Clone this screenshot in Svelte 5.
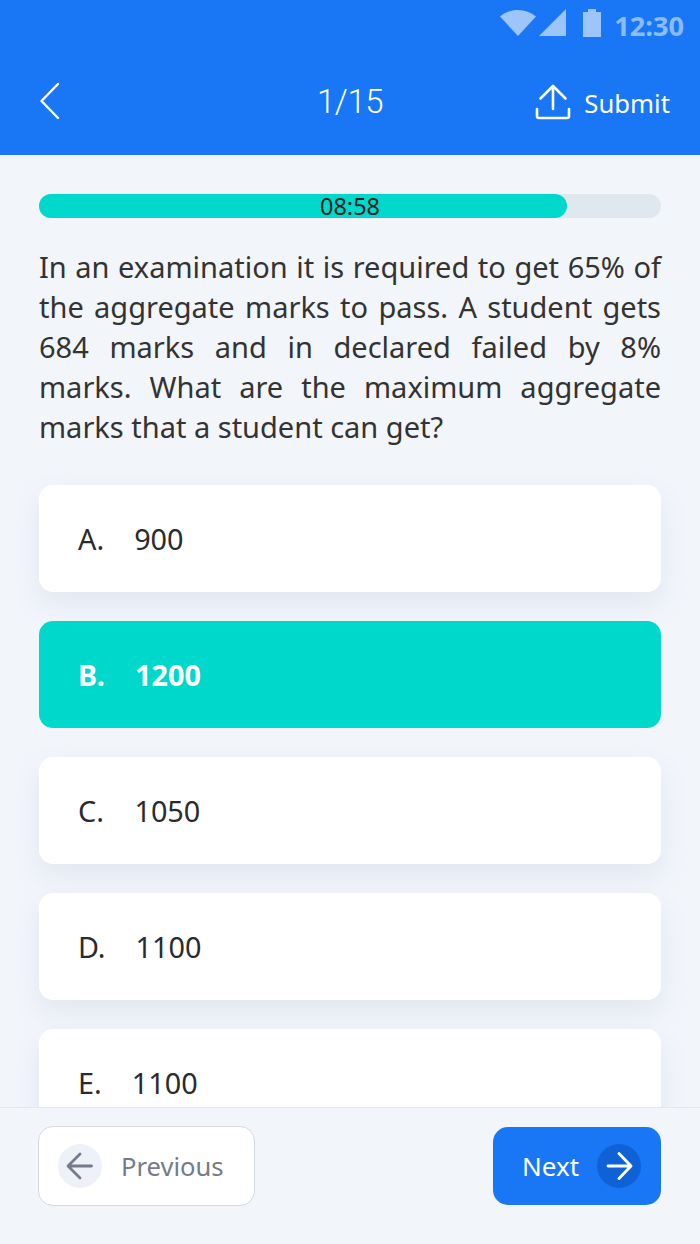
<script>
  const options = [
    { label: "A.", value: "900", gap: 30 },
    { label: "B.", value: "1200", selected: true, gap: 30 },
    { label: "C.", value: "1050", gap: 30.500 },
    { label: "D.", value: "1100", gap: 30 },
    { label: "E.", value: "1100", gap: 30 }
  ];
</script>

<main class="app">
  <header class="header">
    <div class="status">
      <svg width="36" height="28" viewBox="0 0 36 28" class="wifi"><path d="M0 7.500C5 3.200 11 1 18 1s13 2.200 18 6.500L18 27z" fill="#fff" /></svg>
      <svg width="28" height="28" viewBox="0 0 28 28" class="signal"><path d="M0 27L27 0v27z" fill="#fff" /></svg>
      <svg width="18" height="28" viewBox="0 0 18 28" class="battery"><path d="M0 3h5V0h8v3h5v25H0z" fill="#fff" /></svg>
      <span class="time">12:30</span>
    </div>
    <nav class="nav">
      <button class="back" aria-label="Back">
        <svg width="24" height="40" viewBox="0 0 24 40" fill="none" stroke="#fff" stroke-width="2.400" stroke-linecap="round" stroke-linejoin="round"><path d="M19 3L2.500 20 19 37" /></svg>
      </button>
      <div class="count">1/15</div>
      <button class="submit">
        <svg width="36" height="36" viewBox="0 0 36 36" fill="none" stroke="#fff" stroke-width="2.600" stroke-linecap="round" stroke-linejoin="round"><path d="M18 25V3M5.500 14.500L18 2l12.500 12.500M2 25v7a2 2 0 0 0 2 2h28a2 2 0 0 0 2-2v-7" /></svg>
        <span>Submit</span>
      </button>
    </nav>
  </header>

  <section class="content">
    <div class="timer">
      <div class="timer-fill" style="width: 84.900%"></div>
      <span>08:58</span>
    </div>
    <p class="question">In an examination it is required to get 65% of the aggregate marks to pass. A student gets 684 marks and in declared failed by 8% marks. What are the maximum aggregate marks that a student can get?</p>
    <div class="options">
      {#each options as opt}
        <div class="option" class:selected={opt.selected}>
          <span class="label" style="margin-right: {opt.gap}px">{opt.label}</span>
          <span>{opt.value}</span>
        </div>
      {/each}
    </div>
  </section>

  <footer class="footer">
    <button class="btn prev">
      <span class="circle">
        <svg width="28" height="28" viewBox="0 0 28 28" fill="none" stroke="#757b8a" stroke-width="2.800" stroke-linecap="round" stroke-linejoin="round"><path d="M25.500 14H3M14 2L2 14l12 12" /></svg>
      </span>
      Previous
    </button>
    <button class="btn next">
      Next
      <span class="circle">
        <svg width="28" height="28" viewBox="0 0 28 28" fill="none" stroke="#fff" stroke-width="2.800" stroke-linecap="round" stroke-linejoin="round"><path d="M3 14h22.500M14 1.500L26 14 14 26.500" /></svg>
      </span>
    </button>
  </footer>
</main>

<style>
  :global(body) { margin: 0; background: #f2f5fa; }
  .app { height: 1244px; display: flex; flex-direction: column; overflow: hidden; font-family: "Noto Sans", "Open Sans", sans-serif; color: #222; background: #f2f5fa; }
  button { font-family: inherit; border: none; background: none; padding: 0; cursor: pointer; }

  .header { height: 155px; flex-shrink: 0; background: #1976f5; color: #fff; box-sizing: border-box; padding: 0 30px 0 39px; }
  .status { height: 50px; display: flex; justify-content: flex-end; align-items: flex-start; margin-right: -14px; }
  .status svg { opacity: .58; margin-top: 9px; }
  .wifi { margin-right: 3px; }
  .signal { margin-right: 16px; }
  .battery { margin-right: 13px; }
  .time { font-size: 27.200px; font-weight: 700; opacity: .5; line-height: 51px; }

  .nav { height: 105px; display: flex; align-items: center; justify-content: space-between; position: relative; padding-bottom: 3px; box-sizing: border-box; }
  .back { display: flex; }
  .count { position: absolute; left: 278px; top: 33px; font-family: Roboto, sans-serif; font-weight: 300; font-size: 33px; letter-spacing: -.5px; line-height: 38px; }
  .submit { display: flex; align-items: center; gap: 13px; color: #fff; font-size: 25.700px; }
  .submit svg { margin-top: 2px; }
  .submit span { padding-top: 5px; }

  .content { flex: 1; min-height: 0; overflow: hidden; padding: 39px 39px 0; }

  .timer { position: relative; height: 24px; border-radius: 12px; background: #dfe7ef; text-align: center; font-size: 23.500px; line-height: 24px; color: #222; }
  .timer-fill { position: absolute; left: 0; top: 0; bottom: 0; background: #00d8cb; border-radius: 12px; }
  .timer span { position: relative; }

  .question { margin: 29px 0 38px; font-size: 29px; line-height: 40px; text-align: justify; color: #333; }

  .options { display: flex; flex-direction: column; gap: 29px; }
  .option { height: 107px; flex-shrink: 0; box-sizing: border-box; padding: 0 39px; display: flex; align-items: center; background: #fff; border-radius: 14px; font-size: 28.800px; box-shadow: 0 12px 24px rgba(140, 160, 200, .16); color: #2b2b2b; }
  .option.selected { background: #00d8cb; color: #fff; font-weight: 700; box-shadow: none; }

  .footer { height: 137px; flex-shrink: 0; box-sizing: border-box; border-top: 1px solid #e2e7ee; background: #f2f5fa; padding: 18px 39px 0 38px; display: flex; justify-content: space-between; align-items: flex-start; }
  .btn { height: 78px; border-radius: 15px; display: flex; align-items: center; font-size: 26px; box-sizing: border-box; }
  .circle { width: 44px; height: 44px; border-radius: 50%; display: flex; align-items: center; justify-content: center; }
  .prev { width: 217px; height: 80px; background: #fff; border: 1px solid #d3d9e3; color: #757b8a; padding-left: 19px; gap: 19px; font-size: 25.600px; }
  .prev .circle { background: #eef1f8; }
  .next { width: 168px; margin-top: 1px; background: #1976f5; color: #fff; padding-left: 29px; gap: 18px; }
  .next .circle { background: #0f62d6; }
</style>
